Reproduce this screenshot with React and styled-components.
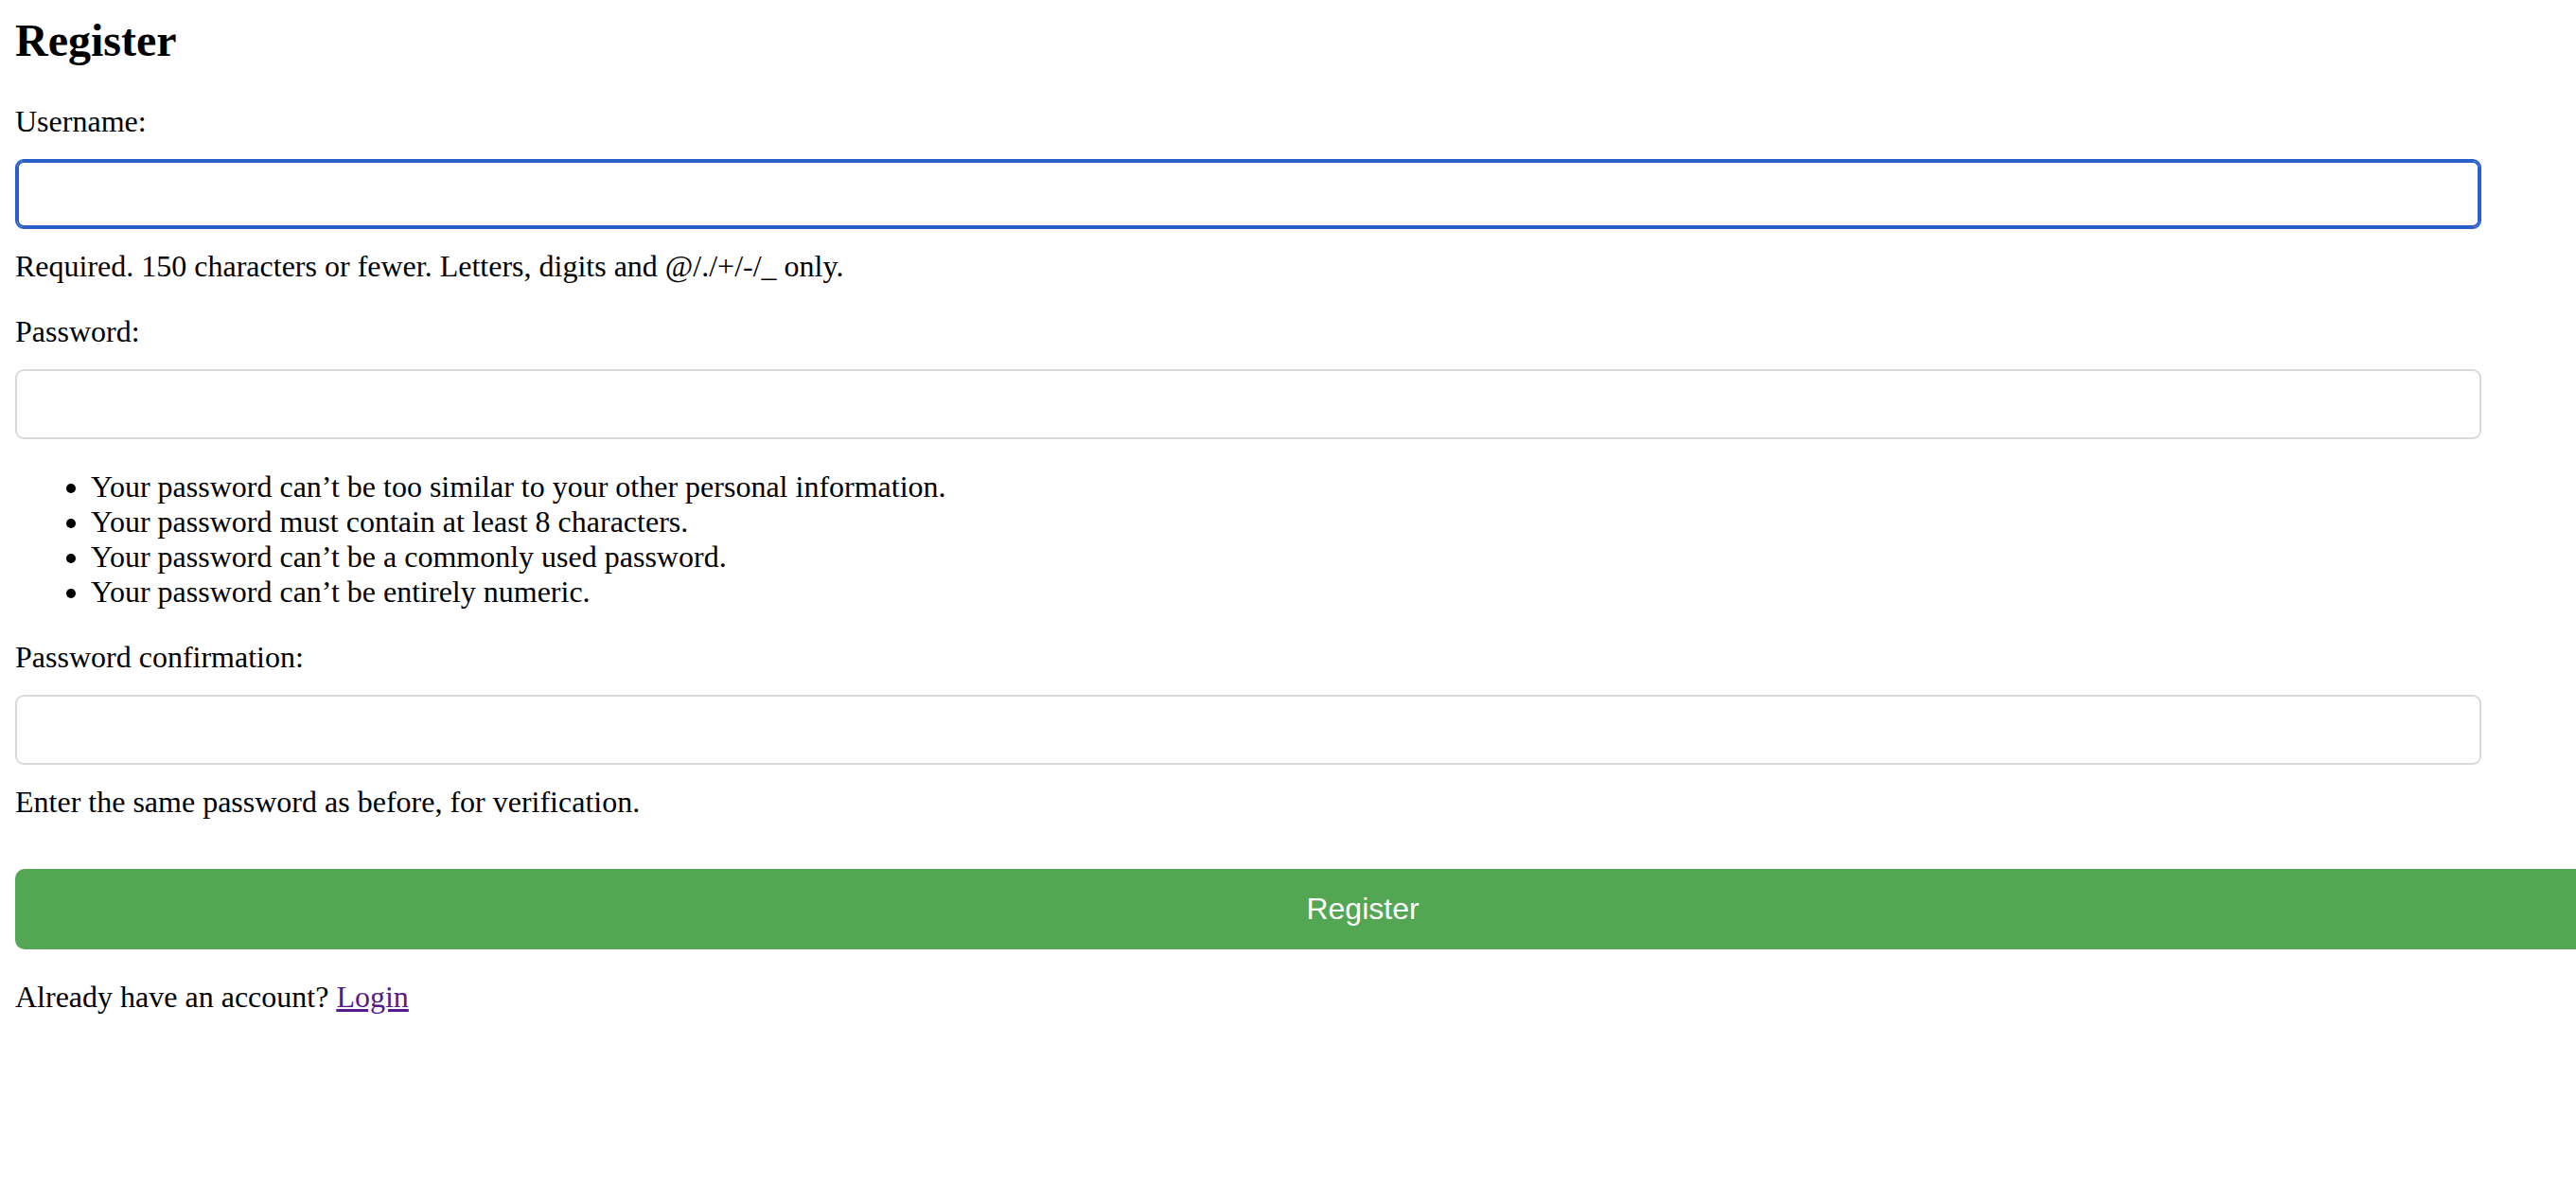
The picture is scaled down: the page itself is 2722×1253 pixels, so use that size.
import React from 'react'
import styled, { createGlobalStyle, css } from 'styled-components'

const GlobalStyle = createGlobalStyle`
  html {
    overflow-x: hidden;
  }

  body {
    margin: 0;
    background: #ffffff;
    color: #000000;
    font-family: "Liberation Serif", "Times New Roman", serif;
    font-size: 32px;
  }
`

const Page = styled.div`
  padding: 16px;
`

const Title = styled.h2`
  margin: 0 0 40px;
  font-size: 48px;
  font-weight: bold;
  line-height: 54px;
`

const Form = styled.form`
  display: block;
  margin: 0;
`

const Field = styled.div`
  margin: 0 0 32px;
`

const Label = styled.label`
  display: block;
  line-height: 37px;
`

const TextInput = styled.input`
  display: block;
  box-sizing: border-box;
  width: 2606px;
  height: 74px;
  margin: 21px 0;
  padding: 0 16px;
  border: 2px solid #dadada;
  border-radius: 9px;
  background: #ffffff;
  font-family: "Liberation Sans", Arial, sans-serif;
  font-size: 26px;
  outline: none;

  ${({ $focused }) =>
    $focused &&
    css`
      border-color: #2a5fc9;
      box-shadow: inset 0 0 0 2px #2a5fc9;
    `}
`

const HelpText = styled.span`
  display: block;
  line-height: 37px;
`

const RuleList = styled.ul`
  margin: 32px 0 0;
  padding-left: 80px;

  li {
    line-height: 37px;
  }
`

const SubmitButton = styled.button`
  display: block;
  width: 2848px;
  margin: 52px 0 32px;
  padding: 24px 0;
  border: none;
  border-radius: 10px;
  background: #53a653;
  color: #ffffff;
  font-family: "Liberation Sans", Arial, sans-serif;
  font-size: 32px;
  line-height: 37px;
  cursor: pointer;
`

const Footer = styled.p`
  margin: 0;
  line-height: 37px;
`

const LoginLink = styled.a`
  color: #551a8b;
  text-decoration: underline;
`

const passwordRules = [
  'Your password can’t be too similar to your other personal information.',
  'Your password must contain at least 8 characters.',
  'Your password can’t be a commonly used password.',
  'Your password can’t be entirely numeric.',
]

const App = () => (
  <>
    <GlobalStyle />
    <Page>
      <Title>Register</Title>

      <Form onSubmit={(e) => e.preventDefault()}>
        <Field>
          <Label htmlFor="id_username">Username:</Label>
          <TextInput id="id_username" type="text" $focused />
          <HelpText>Required. 150 characters or fewer. Letters, digits and @/./+/-/_ only.</HelpText>
        </Field>

        <Field>
          <Label htmlFor="id_password1">Password:</Label>
          <TextInput id="id_password1" type="password" />
          <RuleList>
            {passwordRules.map((rule) => (
              <li key={rule}>{rule}</li>
            ))}
          </RuleList>
        </Field>

        <Field>
          <Label htmlFor="id_password2">Password confirmation:</Label>
          <TextInput id="id_password2" type="password" />
          <HelpText>Enter the same password as before, for verification.</HelpText>
        </Field>

        <SubmitButton type="submit">Register</SubmitButton>
      </Form>

      <Footer>
        Already have an account? <LoginLink href="#login">Login</LoginLink>
      </Footer>
    </Page>
  </>
)

export default App
